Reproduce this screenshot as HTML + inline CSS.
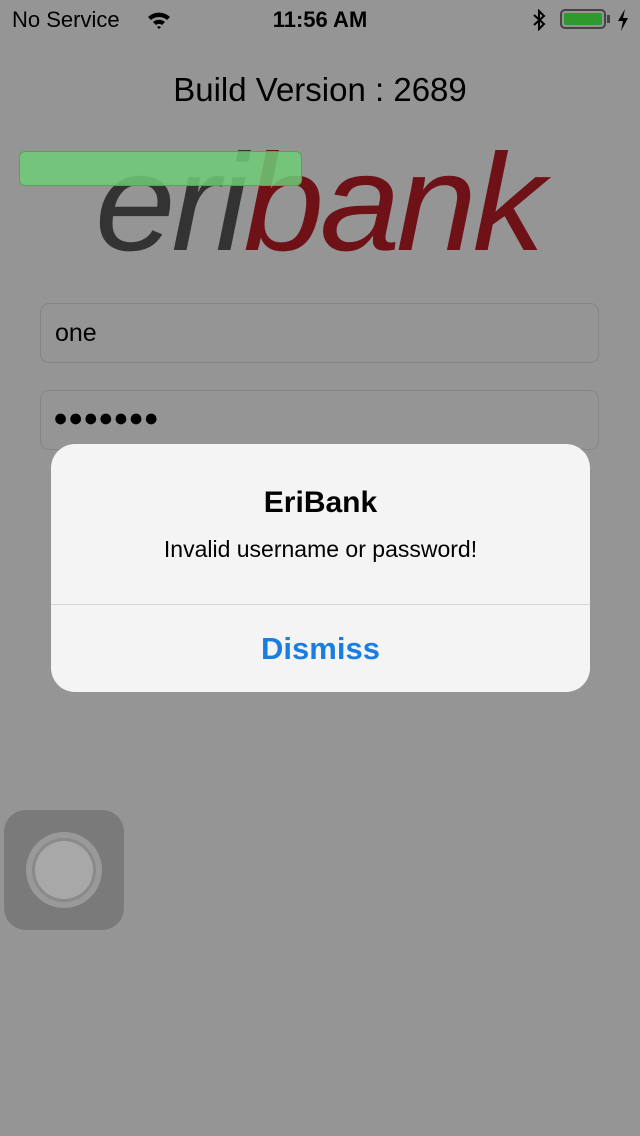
<!DOCTYPE html>
<html><head><meta charset="utf-8"><style>
body{margin:0;width:640px;height:1136px;background:#959595;font-family:"Liberation Sans",sans-serif;position:relative;overflow:hidden}
.a{position:absolute}
.field{position:absolute;left:40px;width:559px;height:60px;border:1px solid #858585;border-radius:9px;background:#959595;box-sizing:border-box}
</style></head><body>
<div class="a" style="left:12px;top:7px;font-size:22px;color:#000">No Service</div>
<svg class="a" style="left:146px;top:10px" width="26" height="20" viewBox="0 0 26 20"><path d="M2 7 A16 16 0 0 1 24 7 L21 10 A12 12 0 0 0 5 10Z M7 12 A9 9 0 0 1 19 12 L16 15 A5 5 0 0 0 10 15Z M11 17 A3 3 0 0 1 15 17 L13 19Z" fill="#000"/></svg>
<div class="a" style="left:0;width:640px;top:7px;text-align:center;font-size:22px;font-weight:bold;color:#000">11:56 AM</div>
<svg class="a" style="left:532px;top:9px" width="14" height="22" viewBox="0 0 14 22"><path d="M2 6 L12 15 L7 20 L7 2 L12 7 L2 16" stroke="#000" stroke-width="2" fill="none"/></svg>
<div class="a" style="left:560px;top:9px;width:46px;height:20px;border:2px solid #444;border-radius:5px;box-sizing:border-box;padding:2px"><div style="background:#2e9a2e;width:100%;height:100%;border-radius:2px"></div></div>
<div class="a" style="left:607px;top:15px;width:3px;height:8px;background:#444"></div>
<svg class="a" style="left:617px;top:9px" width="12" height="22" viewBox="0 0 12 22"><path d="M8 0 L1 12 L6 12 L4 22 L11 9 L6 9Z" fill="#000"/></svg>
<div class="a" style="left:0;width:640px;top:71px;text-align:center;font-size:33px;color:#000">Build Version : 2689</div>
<div class="a" style="left:95px;top:134px;font-size:138px;font-style:italic;letter-spacing:-4px;transform:scaleX(1.05);transform-origin:left top;line-height:1"><span style="color:#333">eri</span><span style="color:#6f1218">bank</span></div>
<div class="a" style="left:19px;top:151px;width:283px;height:35px;background:rgba(110,205,120,0.85);border:1px solid #5aa05a;border-radius:6px;box-sizing:border-box"></div>
<div class="field" style="top:303px"><div style="position:absolute;left:14px;top:15px;font-size:25px">one</div></div>
<div class="field" style="top:390px"><div style="position:absolute;left:12px;top:13px;font-size:25px;letter-spacing:0px">●●●●●●●</div></div>
<div class="a" style="left:51px;top:444px;width:539px;height:248px;background:#f4f4f4;border-radius:24px;overflow:hidden">
<div style="position:absolute;top:42px;width:100%;text-align:center;font-size:30px;font-weight:bold;color:#000">EriBank</div>
<div style="position:absolute;top:92px;width:100%;text-align:center;font-size:23px;color:#000">Invalid username or password!</div>
<div style="position:absolute;top:160px;width:100%;height:1px;background:#d6d6d6"></div>
<div style="position:absolute;top:187px;width:100%;text-align:center;font-size:31px;font-weight:bold;color:#1a7ee0">Dismiss</div>
</div>
<div class="a" style="left:4px;top:810px;width:120px;height:120px;background:#7a7a7a;border-radius:22px"></div>
<div class="a" style="left:26px;top:832px;width:76px;height:76px;border-radius:50%;background:#999"></div>
<div class="a" style="left:35px;top:841px;width:58px;height:58px;border-radius:50%;background:#a8a8a8;box-shadow:0 0 0 3px #8a8a8a"></div>
</body></html>
